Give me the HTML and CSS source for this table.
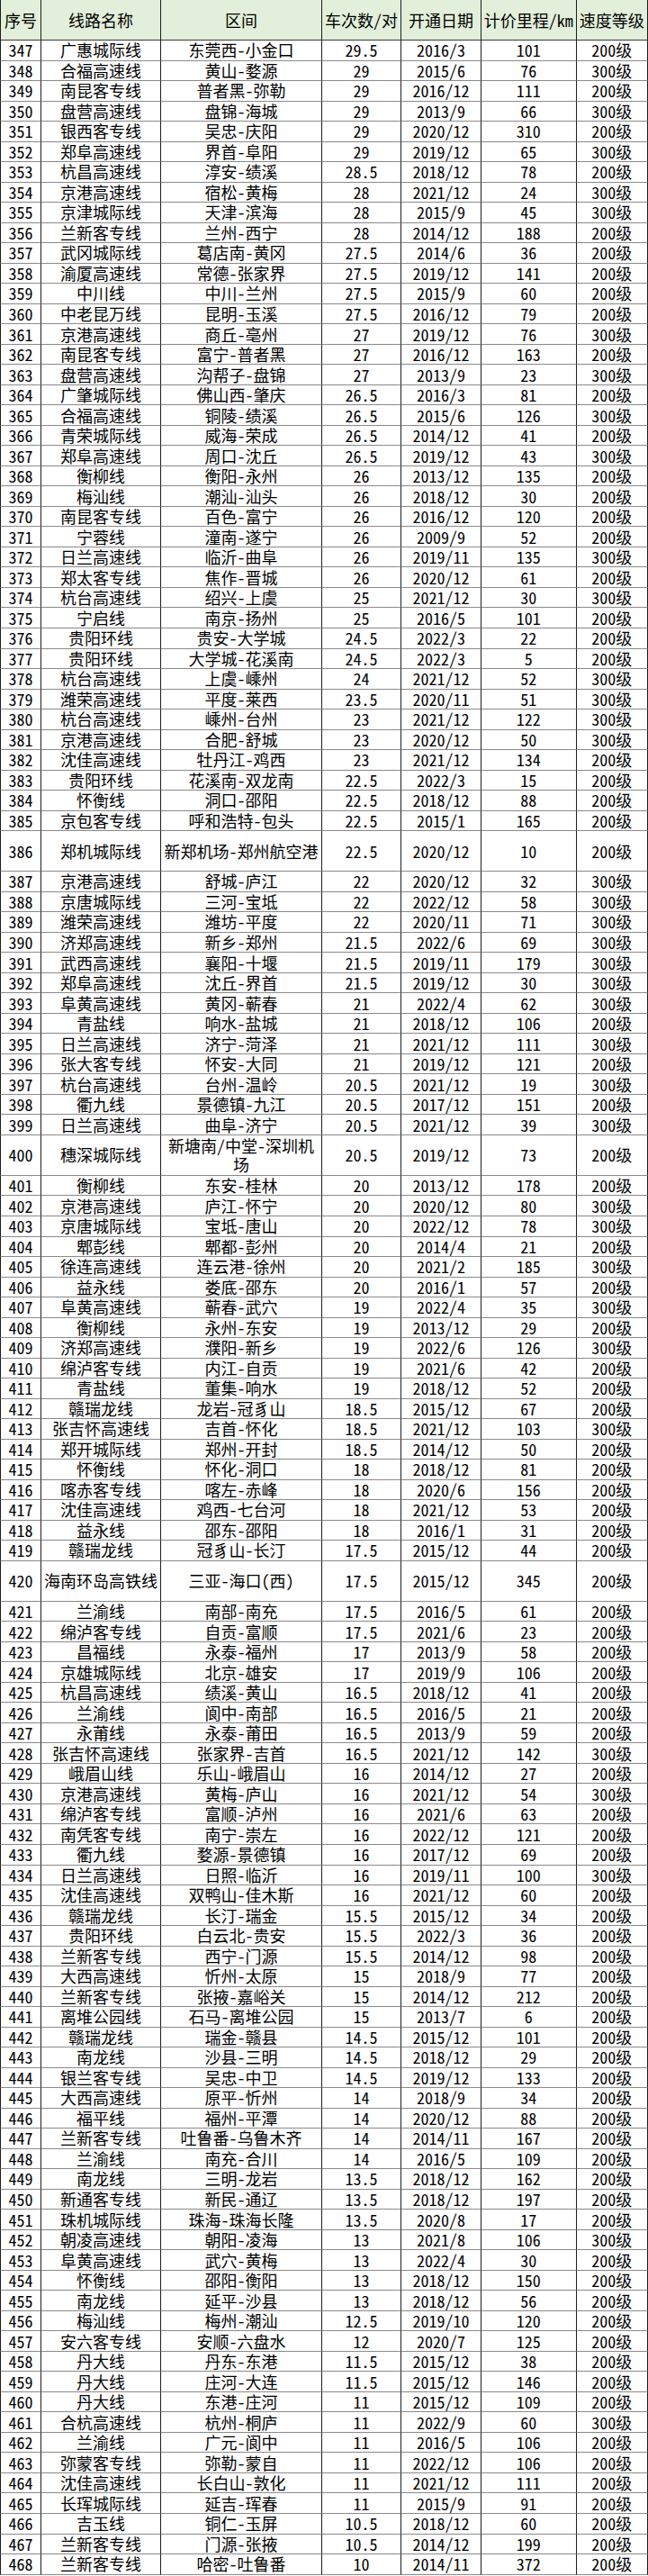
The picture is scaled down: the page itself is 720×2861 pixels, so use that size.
FILE: index.html
```html
<!DOCTYPE html>
<html lang="zh-CN">
<head>
<meta charset="utf-8">
<title>线路表</title>
<link rel="stylesheet" href="styles.css">
</head>
<body>
<div class="sheet">
<div class="r h"><span>序号</span><span>线路名称</span><span>区间</span><span>车次数/对</span><span>开通日期</span><span>计价里程/km</span><span>速度等级</span></div>
<div class="r"><span>347</span><span>广惠城际线</span><span>东莞西-小金口</span><span>29.5</span><span>2016/3</span><span>101</span><span>200级</span></div>
<div class="r"><span>348</span><span>合福高速线</span><span>黄山-婺源</span><span>29</span><span>2015/6</span><span>76</span><span>300级</span></div>
<div class="r"><span>349</span><span>南昆客专线</span><span>普者黑-弥勒</span><span>29</span><span>2016/12</span><span>111</span><span>200级</span></div>
<div class="r"><span>350</span><span>盘营高速线</span><span>盘锦-海城</span><span>29</span><span>2013/9</span><span>66</span><span>300级</span></div>
<div class="r"><span>351</span><span>银西客专线</span><span>吴忠-庆阳</span><span>29</span><span>2020/12</span><span>310</span><span>200级</span></div>
<div class="r"><span>352</span><span>郑阜高速线</span><span>界首-阜阳</span><span>29</span><span>2019/12</span><span>65</span><span>300级</span></div>
<div class="r"><span>353</span><span>杭昌高速线</span><span>淳安-绩溪</span><span>28.5</span><span>2018/12</span><span>78</span><span>200级</span></div>
<div class="r"><span>354</span><span>京港高速线</span><span>宿松-黄梅</span><span>28</span><span>2021/12</span><span>24</span><span>300级</span></div>
<div class="r"><span>355</span><span>京津城际线</span><span>天津-滨海</span><span>28</span><span>2015/9</span><span>45</span><span>300级</span></div>
<div class="r"><span>356</span><span>兰新客专线</span><span>兰州-西宁</span><span>28</span><span>2014/12</span><span>188</span><span>200级</span></div>
<div class="r"><span>357</span><span>武冈城际线</span><span>葛店南-黄冈</span><span>27.5</span><span>2014/6</span><span>36</span><span>200级</span></div>
<div class="r"><span>358</span><span>渝厦高速线</span><span>常德-张家界</span><span>27.5</span><span>2019/12</span><span>141</span><span>200级</span></div>
<div class="r"><span>359</span><span>中川线</span><span>中川-兰州</span><span>27.5</span><span>2015/9</span><span>60</span><span>200级</span></div>
<div class="r"><span>360</span><span>中老昆万线</span><span>昆明-玉溪</span><span>27.5</span><span>2016/12</span><span>79</span><span>200级</span></div>
<div class="r"><span>361</span><span>京港高速线</span><span>商丘-亳州</span><span>27</span><span>2019/12</span><span>76</span><span>300级</span></div>
<div class="r"><span>362</span><span>南昆客专线</span><span>富宁-普者黑</span><span>27</span><span>2016/12</span><span>163</span><span>200级</span></div>
<div class="r"><span>363</span><span>盘营高速线</span><span>沟帮子-盘锦</span><span>27</span><span>2013/9</span><span>23</span><span>300级</span></div>
<div class="r"><span>364</span><span>广肇城际线</span><span>佛山西-肇庆</span><span>26.5</span><span>2016/3</span><span>81</span><span>200级</span></div>
<div class="r"><span>365</span><span>合福高速线</span><span>铜陵-绩溪</span><span>26.5</span><span>2015/6</span><span>126</span><span>300级</span></div>
<div class="r"><span>366</span><span>青荣城际线</span><span>威海-荣成</span><span>26.5</span><span>2014/12</span><span>41</span><span>200级</span></div>
<div class="r"><span>367</span><span>郑阜高速线</span><span>周口-沈丘</span><span>26.5</span><span>2019/12</span><span>43</span><span>300级</span></div>
<div class="r"><span>368</span><span>衡柳线</span><span>衡阳-永州</span><span>26</span><span>2013/12</span><span>135</span><span>200级</span></div>
<div class="r"><span>369</span><span>梅汕线</span><span>潮汕-汕头</span><span>26</span><span>2018/12</span><span>30</span><span>200级</span></div>
<div class="r"><span>370</span><span>南昆客专线</span><span>百色-富宁</span><span>26</span><span>2016/12</span><span>120</span><span>200级</span></div>
<div class="r"><span>371</span><span>宁蓉线</span><span>潼南-遂宁</span><span>26</span><span>2009/9</span><span>52</span><span>200级</span></div>
<div class="r"><span>372</span><span>日兰高速线</span><span>临沂-曲阜</span><span>26</span><span>2019/11</span><span>135</span><span>300级</span></div>
<div class="r"><span>373</span><span>郑太客专线</span><span>焦作-晋城</span><span>26</span><span>2020/12</span><span>61</span><span>200级</span></div>
<div class="r"><span>374</span><span>杭台高速线</span><span>绍兴-上虞</span><span>25</span><span>2021/12</span><span>30</span><span>300级</span></div>
<div class="r"><span>375</span><span>宁启线</span><span>南京-扬州</span><span>25</span><span>2016/5</span><span>101</span><span>200级</span></div>
<div class="r"><span>376</span><span>贵阳环线</span><span>贵安-大学城</span><span>24.5</span><span>2022/3</span><span>22</span><span>200级</span></div>
<div class="r"><span>377</span><span>贵阳环线</span><span>大学城-花溪南</span><span>24.5</span><span>2022/3</span><span>5</span><span>200级</span></div>
<div class="r"><span>378</span><span>杭台高速线</span><span>上虞-嵊州</span><span>24</span><span>2021/12</span><span>52</span><span>300级</span></div>
<div class="r"><span>379</span><span>潍荣高速线</span><span>平度-莱西</span><span>23.5</span><span>2020/11</span><span>51</span><span>300级</span></div>
<div class="r"><span>380</span><span>杭台高速线</span><span>嵊州-台州</span><span>23</span><span>2021/12</span><span>122</span><span>300级</span></div>
<div class="r"><span>381</span><span>京港高速线</span><span>合肥-舒城</span><span>23</span><span>2020/12</span><span>50</span><span>300级</span></div>
<div class="r"><span>382</span><span>沈佳高速线</span><span>牡丹江-鸡西</span><span>23</span><span>2021/12</span><span>134</span><span>200级</span></div>
<div class="r"><span>383</span><span>贵阳环线</span><span>花溪南-双龙南</span><span>22.5</span><span>2022/3</span><span>15</span><span>200级</span></div>
<div class="r"><span>384</span><span>怀衡线</span><span>洞口-邵阳</span><span>22.5</span><span>2018/12</span><span>88</span><span>200级</span></div>
<div class="r"><span>385</span><span>京包客专线</span><span>呼和浩特-包头</span><span>22.5</span><span>2015/1</span><span>165</span><span>200级</span></div>
<div class="r t"><span>386</span><span>郑机城际线</span><span>新郑机场-郑州航空港</span><span>22.5</span><span>2020/12</span><span>10</span><span>200级</span></div>
<div class="r"><span>387</span><span>京港高速线</span><span>舒城-庐江</span><span>22</span><span>2020/12</span><span>32</span><span>300级</span></div>
<div class="r"><span>388</span><span>京唐城际线</span><span>三河-宝坻</span><span>22</span><span>2022/12</span><span>58</span><span>300级</span></div>
<div class="r"><span>389</span><span>潍荣高速线</span><span>潍坊-平度</span><span>22</span><span>2020/11</span><span>71</span><span>300级</span></div>
<div class="r"><span>390</span><span>济郑高速线</span><span>新乡-郑州</span><span>21.5</span><span>2022/6</span><span>69</span><span>300级</span></div>
<div class="r"><span>391</span><span>武西高速线</span><span>襄阳-十堰</span><span>21.5</span><span>2019/11</span><span>179</span><span>300级</span></div>
<div class="r"><span>392</span><span>郑阜高速线</span><span>沈丘-界首</span><span>21.5</span><span>2019/12</span><span>30</span><span>300级</span></div>
<div class="r"><span>393</span><span>阜黄高速线</span><span>黄冈-蕲春</span><span>21</span><span>2022/4</span><span>62</span><span>300级</span></div>
<div class="r"><span>394</span><span>青盐线</span><span>响水-盐城</span><span>21</span><span>2018/12</span><span>106</span><span>200级</span></div>
<div class="r"><span>395</span><span>日兰高速线</span><span>济宁-菏泽</span><span>21</span><span>2021/12</span><span>111</span><span>300级</span></div>
<div class="r"><span>396</span><span>张大客专线</span><span>怀安-大同</span><span>21</span><span>2019/12</span><span>121</span><span>200级</span></div>
<div class="r"><span>397</span><span>杭台高速线</span><span>台州-温岭</span><span>20.5</span><span>2021/12</span><span>19</span><span>300级</span></div>
<div class="r"><span>398</span><span>衢九线</span><span>景德镇-九江</span><span>20.5</span><span>2017/12</span><span>151</span><span>200级</span></div>
<div class="r"><span>399</span><span>日兰高速线</span><span>曲阜-济宁</span><span>20.5</span><span>2021/12</span><span>39</span><span>300级</span></div>
<div class="r t"><span>400</span><span>穗深城际线</span><span>新塘南/中堂-深圳机场</span><span>20.5</span><span>2019/12</span><span>73</span><span>200级</span></div>
<div class="r"><span>401</span><span>衡柳线</span><span>东安-桂林</span><span>20</span><span>2013/12</span><span>178</span><span>200级</span></div>
<div class="r"><span>402</span><span>京港高速线</span><span>庐江-怀宁</span><span>20</span><span>2020/12</span><span>80</span><span>300级</span></div>
<div class="r"><span>403</span><span>京唐城际线</span><span>宝坻-唐山</span><span>20</span><span>2022/12</span><span>78</span><span>300级</span></div>
<div class="r"><span>404</span><span>郫彭线</span><span>郫都-彭州</span><span>20</span><span>2014/4</span><span>21</span><span>200级</span></div>
<div class="r"><span>405</span><span>徐连高速线</span><span>连云港-徐州</span><span>20</span><span>2021/2</span><span>185</span><span>300级</span></div>
<div class="r"><span>406</span><span>益永线</span><span>娄底-邵东</span><span>20</span><span>2016/1</span><span>57</span><span>200级</span></div>
<div class="r"><span>407</span><span>阜黄高速线</span><span>蕲春-武穴</span><span>19</span><span>2022/4</span><span>35</span><span>300级</span></div>
<div class="r"><span>408</span><span>衡柳线</span><span>永州-东安</span><span>19</span><span>2013/12</span><span>29</span><span>200级</span></div>
<div class="r"><span>409</span><span>济郑高速线</span><span>濮阳-新乡</span><span>19</span><span>2022/6</span><span>126</span><span>300级</span></div>
<div class="r"><span>410</span><span>绵泸客专线</span><span>内江-自贡</span><span>19</span><span>2021/6</span><span>42</span><span>200级</span></div>
<div class="r"><span>411</span><span>青盐线</span><span>董集-响水</span><span>19</span><span>2018/12</span><span>52</span><span>200级</span></div>
<div class="r"><span>412</span><span>赣瑞龙线</span><span>龙岩-冠豸山</span><span>18.5</span><span>2015/12</span><span>67</span><span>200级</span></div>
<div class="r"><span>413</span><span>张吉怀高速线</span><span>吉首-怀化</span><span>18.5</span><span>2021/12</span><span>103</span><span>300级</span></div>
<div class="r"><span>414</span><span>郑开城际线</span><span>郑州-开封</span><span>18.5</span><span>2014/12</span><span>50</span><span>200级</span></div>
<div class="r"><span>415</span><span>怀衡线</span><span>怀化-洞口</span><span>18</span><span>2018/12</span><span>81</span><span>200级</span></div>
<div class="r"><span>416</span><span>喀赤客专线</span><span>喀左-赤峰</span><span>18</span><span>2020/6</span><span>156</span><span>200级</span></div>
<div class="r"><span>417</span><span>沈佳高速线</span><span>鸡西-七台河</span><span>18</span><span>2021/12</span><span>53</span><span>200级</span></div>
<div class="r"><span>418</span><span>益永线</span><span>邵东-邵阳</span><span>18</span><span>2016/1</span><span>31</span><span>200级</span></div>
<div class="r"><span>419</span><span>赣瑞龙线</span><span>冠豸山-长汀</span><span>17.5</span><span>2015/12</span><span>44</span><span>200级</span></div>
<div class="r t"><span>420</span><span>海南环岛高铁线</span><span>三亚-海口（西）</span><span>17.5</span><span>2015/12</span><span>345</span><span>200级</span></div>
<div class="r"><span>421</span><span>兰渝线</span><span>南部-南充</span><span>17.5</span><span>2016/5</span><span>61</span><span>200级</span></div>
<div class="r"><span>422</span><span>绵泸客专线</span><span>自贡-富顺</span><span>17.5</span><span>2021/6</span><span>23</span><span>200级</span></div>
<div class="r"><span>423</span><span>昌福线</span><span>永泰-福州</span><span>17</span><span>2013/9</span><span>58</span><span>200级</span></div>
<div class="r"><span>424</span><span>京雄城际线</span><span>北京-雄安</span><span>17</span><span>2019/9</span><span>106</span><span>200级</span></div>
<div class="r"><span>425</span><span>杭昌高速线</span><span>绩溪-黄山</span><span>16.5</span><span>2018/12</span><span>41</span><span>200级</span></div>
<div class="r"><span>426</span><span>兰渝线</span><span>阆中-南部</span><span>16.5</span><span>2016/5</span><span>21</span><span>200级</span></div>
<div class="r"><span>427</span><span>永莆线</span><span>永泰-莆田</span><span>16.5</span><span>2013/9</span><span>59</span><span>200级</span></div>
<div class="r"><span>428</span><span>张吉怀高速线</span><span>张家界-吉首</span><span>16.5</span><span>2021/12</span><span>142</span><span>300级</span></div>
<div class="r"><span>429</span><span>峨眉山线</span><span>乐山-峨眉山</span><span>16</span><span>2014/12</span><span>27</span><span>200级</span></div>
<div class="r"><span>430</span><span>京港高速线</span><span>黄梅-庐山</span><span>16</span><span>2021/12</span><span>54</span><span>300级</span></div>
<div class="r"><span>431</span><span>绵泸客专线</span><span>富顺-泸州</span><span>16</span><span>2021/6</span><span>63</span><span>200级</span></div>
<div class="r"><span>432</span><span>南凭客专线</span><span>南宁-崇左</span><span>16</span><span>2022/12</span><span>121</span><span>200级</span></div>
<div class="r"><span>433</span><span>衢九线</span><span>婺源-景德镇</span><span>16</span><span>2017/12</span><span>69</span><span>200级</span></div>
<div class="r"><span>434</span><span>日兰高速线</span><span>日照-临沂</span><span>16</span><span>2019/11</span><span>100</span><span>300级</span></div>
<div class="r"><span>435</span><span>沈佳高速线</span><span>双鸭山-佳木斯</span><span>16</span><span>2021/12</span><span>60</span><span>200级</span></div>
<div class="r"><span>436</span><span>赣瑞龙线</span><span>长汀-瑞金</span><span>15.5</span><span>2015/12</span><span>34</span><span>200级</span></div>
<div class="r"><span>437</span><span>贵阳环线</span><span>白云北-贵安</span><span>15.5</span><span>2022/3</span><span>36</span><span>200级</span></div>
<div class="r"><span>438</span><span>兰新客专线</span><span>西宁-门源</span><span>15.5</span><span>2014/12</span><span>98</span><span>200级</span></div>
<div class="r"><span>439</span><span>大西高速线</span><span>忻州-太原</span><span>15</span><span>2018/9</span><span>77</span><span>200级</span></div>
<div class="r"><span>440</span><span>兰新客专线</span><span>张掖-嘉峪关</span><span>15</span><span>2014/12</span><span>212</span><span>200级</span></div>
<div class="r"><span>441</span><span>离堆公园线</span><span>石马-离堆公园</span><span>15</span><span>2013/7</span><span>6</span><span>200级</span></div>
<div class="r"><span>442</span><span>赣瑞龙线</span><span>瑞金-赣县</span><span>14.5</span><span>2015/12</span><span>101</span><span>200级</span></div>
<div class="r"><span>443</span><span>南龙线</span><span>沙县-三明</span><span>14.5</span><span>2018/12</span><span>29</span><span>200级</span></div>
<div class="r"><span>444</span><span>银兰客专线</span><span>吴忠-中卫</span><span>14.5</span><span>2019/12</span><span>133</span><span>200级</span></div>
<div class="r"><span>445</span><span>大西高速线</span><span>原平-忻州</span><span>14</span><span>2018/9</span><span>34</span><span>200级</span></div>
<div class="r"><span>446</span><span>福平线</span><span>福州-平潭</span><span>14</span><span>2020/12</span><span>88</span><span>200级</span></div>
<div class="r"><span>447</span><span>兰新客专线</span><span>吐鲁番-乌鲁木齐</span><span>14</span><span>2014/11</span><span>167</span><span>200级</span></div>
<div class="r"><span>448</span><span>兰渝线</span><span>南充-合川</span><span>14</span><span>2016/5</span><span>109</span><span>200级</span></div>
<div class="r"><span>449</span><span>南龙线</span><span>三明-龙岩</span><span>13.5</span><span>2018/12</span><span>162</span><span>200级</span></div>
<div class="r"><span>450</span><span>新通客专线</span><span>新民-通辽</span><span>13.5</span><span>2018/12</span><span>197</span><span>200级</span></div>
<div class="r"><span>451</span><span>珠机城际线</span><span>珠海-珠海长隆</span><span>13.5</span><span>2020/8</span><span>17</span><span>200级</span></div>
<div class="r"><span>452</span><span>朝凌高速线</span><span>朝阳-凌海</span><span>13</span><span>2021/8</span><span>106</span><span>300级</span></div>
<div class="r"><span>453</span><span>阜黄高速线</span><span>武穴-黄梅</span><span>13</span><span>2022/4</span><span>30</span><span>200级</span></div>
<div class="r"><span>454</span><span>怀衡线</span><span>邵阳-衡阳</span><span>13</span><span>2018/12</span><span>150</span><span>200级</span></div>
<div class="r"><span>455</span><span>南龙线</span><span>延平-沙县</span><span>13</span><span>2018/12</span><span>56</span><span>200级</span></div>
<div class="r"><span>456</span><span>梅汕线</span><span>梅州-潮汕</span><span>12.5</span><span>2019/10</span><span>120</span><span>200级</span></div>
<div class="r"><span>457</span><span>安六客专线</span><span>安顺-六盘水</span><span>12</span><span>2020/7</span><span>125</span><span>200级</span></div>
<div class="r"><span>458</span><span>丹大线</span><span>丹东-东港</span><span>11.5</span><span>2015/12</span><span>38</span><span>200级</span></div>
<div class="r"><span>459</span><span>丹大线</span><span>庄河-大连</span><span>11.5</span><span>2015/12</span><span>146</span><span>200级</span></div>
<div class="r"><span>460</span><span>丹大线</span><span>东港-庄河</span><span>11</span><span>2015/12</span><span>109</span><span>200级</span></div>
<div class="r"><span>461</span><span>合杭高速线</span><span>杭州-桐庐</span><span>11</span><span>2022/9</span><span>60</span><span>300级</span></div>
<div class="r"><span>462</span><span>兰渝线</span><span>广元-阆中</span><span>11</span><span>2016/5</span><span>106</span><span>200级</span></div>
<div class="r"><span>463</span><span>弥蒙客专线</span><span>弥勒-蒙自</span><span>11</span><span>2022/12</span><span>106</span><span>200级</span></div>
<div class="r"><span>464</span><span>沈佳高速线</span><span>长白山-敦化</span><span>11</span><span>2021/12</span><span>111</span><span>200级</span></div>
<div class="r"><span>465</span><span>长珲城际线</span><span>延吉-珲春</span><span>11</span><span>2015/9</span><span>91</span><span>200级</span></div>
<div class="r"><span>466</span><span>吉玉线</span><span>铜仁-玉屏</span><span>10.5</span><span>2018/12</span><span>60</span><span>200级</span></div>
<div class="r"><span>467</span><span>兰新客专线</span><span>门源-张掖</span><span>10.5</span><span>2014/12</span><span>199</span><span>200级</span></div>
<div class="r"><span>468</span><span>兰新客专线</span><span>哈密-吐鲁番</span><span>10</span><span>2014/11</span><span>372</span><span>200级</span></div>
</div>
</body>
</html>
```
FILE: styles.css
```css
html, body {
  margin: 0;
  padding: 0;
  background: #ffffff;
}

.sheet {
  width: 720px;
  font-family: "Noto Sans CJK SC", "Noto Sans", sans-serif;
  font-size: 18px;
  font-feature-settings: "hwid" 1;
  color: #000000;
}

.r {
  display: grid;
  grid-template-columns: 46px 133px 179px 88px 89px 105.5px 79.5px;
  height: 22.527px;
}

.r.t,
.r.h {
  height: 45.054px;
}

.r.h {
  background: #e2efda;
}

.r > span {
  box-sizing: border-box;
  display: flex;
  align-items: center;
  justify-content: center;
  text-align: center;
  padding: 0 2px;
  line-height: 21px;
  border-right: 1px solid #1e1e1e;
  border-bottom: 1px solid #8a8a8a;
}

.r > span:first-child {
  border-left: 1px solid #1e1e1e;
}

.r.h > span {
  border-bottom-color: #3a3a3a;
}
```
